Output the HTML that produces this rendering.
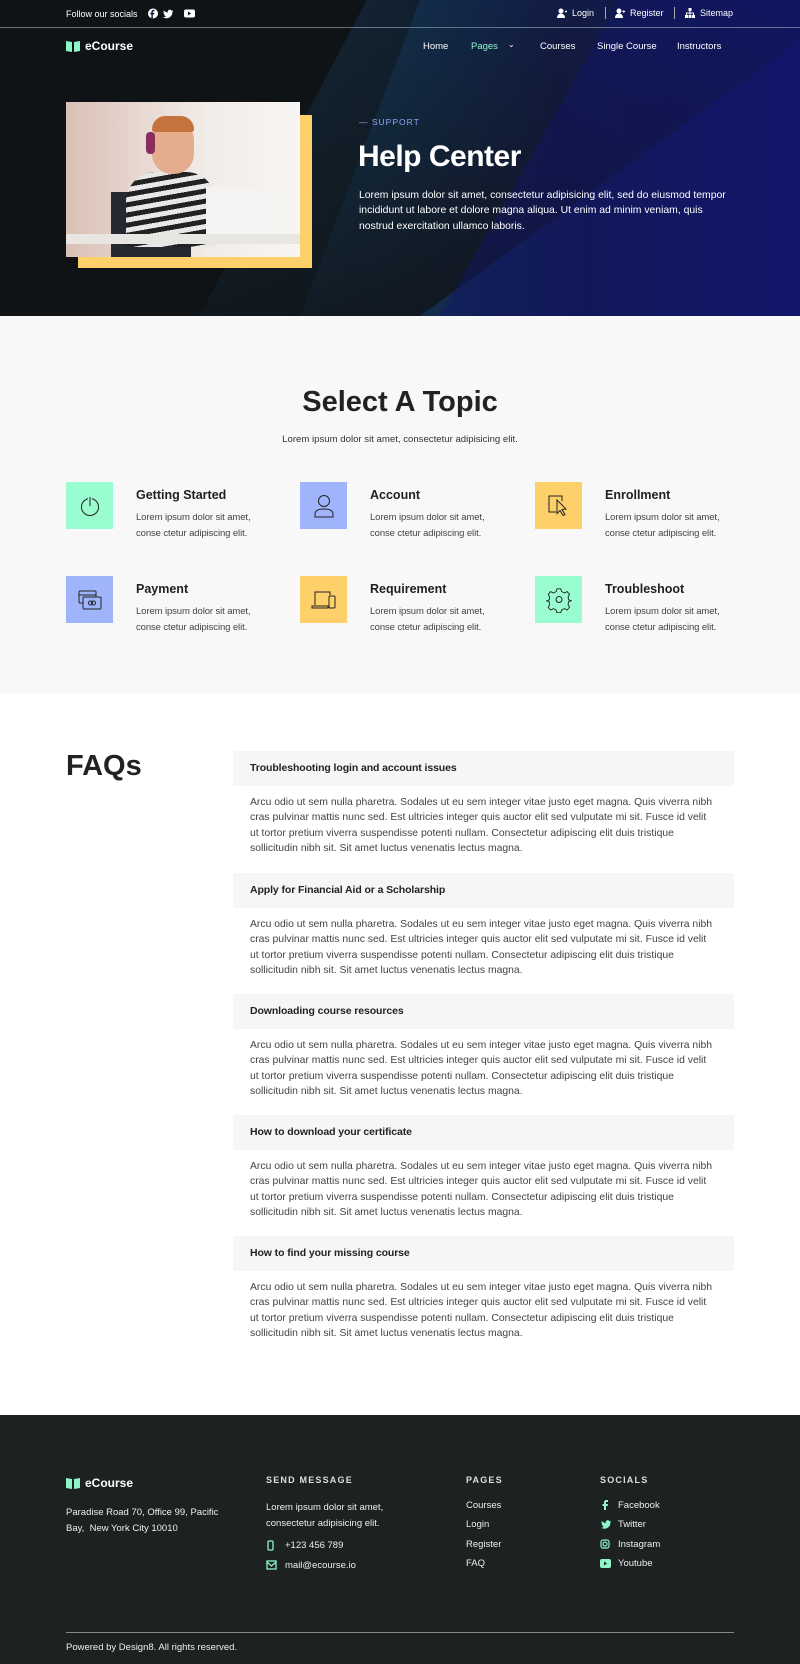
<!DOCTYPE html>
<html><head><meta charset="utf-8"><style>
*{margin:0;padding:0;box-sizing:border-box}
body{width:800px;height:1664px;font-family:"Liberation Sans",sans-serif;color:#222;background:#fff;overflow:hidden;position:relative}
.abs{position:absolute}
#hero{position:absolute;left:0;top:0;width:800px;height:316px;overflow:hidden;background:#101316}
.w{color:#fff}
.small{font-size:9px}
.nav a{position:absolute;top:41px;font-size:9.5px;color:#fff}
#topics{position:absolute;top:316px;left:0;width:800px;height:377px;background:#f8f8f8}
.ic{position:absolute;width:47px;height:47px;display:flex;align-items:center;justify-content:center}
.tt{position:absolute;font-size:12.5px;font-weight:bold;color:#1f1f1f}
.td{position:absolute;font-size:9.5px;line-height:16px;color:#444;letter-spacing:-0.1px}
.q{position:absolute;left:233px;width:501px;height:35px;background:#f6f6f6;font-size:10.5px;font-weight:bold;padding:11px 0 0 17px;color:#222;letter-spacing:-0.1px}
.a{position:absolute;left:250px;font-size:10.4px;line-height:15.4px;color:#444;letter-spacing:0;white-space:nowrap}
#footer{position:absolute;top:1415px;left:0;width:800px;height:249px;background:#1e2122;color:#eee}
.fh{position:absolute;top:1475px;font-size:9px;letter-spacing:1.2px;font-weight:bold;color:#ddd}
.ft{position:absolute;font-size:9.5px;color:#eee}
</style></head><body>
<div id="hero">
 <svg class="abs" style="left:0;top:0" width="800" height="316">
  <defs>
   <linearGradient id="g1" x1="0" y1="0" x2="1" y2="0"><stop offset="0" stop-color="#17445f"/><stop offset="0.35" stop-color="#132f4c"/><stop offset="0.6" stop-color="#121c4a"/><stop offset="1" stop-color="#12166a"/></linearGradient>
   <linearGradient id="fade" x1="0" y1="0" x2="0.2" y2="1"><stop offset="0" stop-color="#101316" stop-opacity="0"/><stop offset="1" stop-color="#101316" stop-opacity="1"/></linearGradient>
  </defs>
  <rect width="800" height="316" fill="#101316"/>
  <polygon points="367,0 800,0 800,316 200,316" fill="url(#g1)"/>
  <polygon points="367,0 420,0 300,316 200,316" fill="#101316" opacity="0.5"/>
  <polygon points="367,0 800,0 800,40 420,316 200,316" fill="url(#fade)" opacity="0.8"/>
  <polygon points="620,0 800,0 800,316 440,316" fill="#12166a" opacity="0.45"/>
  <line x1="0" y1="27.5" x2="800" y2="27.5" stroke="#7f9aa8" stroke-width="1" opacity="0.7"/>
 </svg>
 <div class="abs w small" style="left:66px;top:9px">Follow our socials</div>
 <svg class="abs" style="left:148px;top:8px" width="50" height="12" fill="#fff"><circle cx="5" cy="5.5" r="5"/><path d="M6.5 3.2h-1c-.5 0-.7.3-.7.7v1h1.6l-.2 1.5H4.8v4H3.4v-4H2.3V4.9h1.1V3.8c0-1.2.8-1.9 1.9-1.9h1.2z" fill="#113"/><path d="M19 3c-.4.2-.8.3-1.2.3.4-.3.8-.7.9-1.2-.4.2-.8.4-1.3.5a2 2 0 00-3.5 1.9c-1.7-.1-3.2-.9-4.2-2.1-.6 1 0 2.2.7 2.7-.3 0-.6-.1-.9-.2 0 1 .7 1.8 1.6 2-.3.1-.6.1-.9 0 .3.8 1 1.4 1.9 1.4-.9.7-2 1-3.1.9 4.7 2.7 9.6-.5 9.4-5.2.5-.3.9-.7 1.2-1.2z" transform="translate(6,0)"/><rect x="36" y="1.5" width="11" height="8" rx="2"/><path d="M40 3.5v4l3.2-2z" fill="#113"/></svg>
 <svg class="abs" style="left:557px;top:8px" width="10" height="10" fill="#fff"><circle cx="4" cy="3" r="2.5"/><path d="M0 10c0-3 2-4.5 4-4.5s4 1.5 4 4.5z"/><path d="M8 3.5h2M9 2.5v2" stroke="#fff"/></svg>
 <div class="abs w small" style="left:572px;top:8px">Login</div>
 <div class="abs" style="left:605px;top:7px;width:1px;height:12px;background:#aaa"></div>
 <svg class="abs" style="left:615px;top:8px" width="10" height="10" fill="#fff"><circle cx="4" cy="3" r="2.5"/><path d="M0 10c0-3 2-4.5 4-4.5s4 1.5 4 4.5z"/><path d="M7.5 3.5h2.5M8.75 2.2v2.6" stroke="#fff"/></svg>
 <div class="abs w small" style="left:630px;top:8px">Register</div>
 <div class="abs" style="left:674px;top:7px;width:1px;height:12px;background:#aaa"></div>
 <svg class="abs" style="left:685px;top:8px" width="10" height="10" fill="#fff"><rect x="3.5" y="0" width="3" height="3"/><rect x="0" y="7" width="3" height="3"/><rect x="3.5" y="7" width="3" height="3"/><rect x="7" y="7" width="3" height="3"/><path d="M5 3v4M1.5 7V5h7v2" stroke="#fff" fill="none"/></svg>
 <div class="abs w small" style="left:700px;top:8px">Sitemap</div>
 <svg class="abs" style="left:66px;top:40px" width="14" height="12"><path d="M0 1l6 1v10L0 11zM8 2l6-1v10l-6 1z" fill="#8ef5c8"/></svg>
 <div class="abs w" style="left:85px;top:39px;font-size:12px;font-weight:bold">eCourse</div>
 <div class="nav">
  <a style="left:423px">Home</a>
  <a style="left:471px;color:#8ef5c8">Pages</a>
  <a style="left:508px;top:40px;font-size:8px">&#8964;</a>
  <a style="left:540px">Courses</a>
  <a style="left:597px">Single Course</a>
  <a style="left:677px">Instructors</a>
 </div>
 <div class="abs" style="left:78px;top:115px;width:234px;height:153px;background:#fdd06a"></div>
 <div class="abs" style="left:66px;top:102px;width:234px;height:155px;overflow:hidden;background:linear-gradient(90deg,#d9c0b4 0%,#e7d6cf 30%,#f1ece8 60%,#f7f5f3 100%)">
  <div class="abs" style="left:45px;top:90px;width:80px;height:65px;background:#262a30"></div>
  <div class="abs" style="left:60px;top:70px;width:90px;height:75px;border-radius:30px 30px 0 0;background:repeating-linear-gradient(170deg,#222 0 5px,#e8e8e8 5px 10px)"></div>
  <div class="abs" style="left:86px;top:18px;width:42px;height:54px;border-radius:20px;background:#e3ad8e"></div>
  <div class="abs" style="left:86px;top:14px;width:42px;height:16px;border-radius:20px 20px 4px 4px;background:#c4733d"></div>
  <div class="abs" style="left:80px;top:30px;width:9px;height:22px;border-radius:4px;background:#8a2c5e"></div>
  <div class="abs" style="left:140px;top:85px;width:80px;height:55px;background:#f4f3f2"></div>
  <div class="abs" style="left:0;top:132px;width:234px;height:10px;background:#e8e6e3"></div>
 </div>
 <div class="abs" style="left:359px;top:117px;font-size:8.5px;letter-spacing:1px;color:#8fa6f8">— SUPPORT</div>
 <div class="abs w" style="left:358px;top:140px;font-size:30px;font-weight:bold;letter-spacing:-0.5px">Help Center</div>
 <div class="abs w" style="left:359px;top:188px;white-space:nowrap;font-size:10.4px;line-height:15.4px;letter-spacing:0">Lorem ipsum dolor sit amet, consectetur adipisicing elit, sed do eiusmod tempor<br>incididunt ut labore et dolore magna aliqua. Ut enim ad minim veniam, quis<br>nostrud exercitation ullamco laboris.</div>
</div>

<div id="topics">
 <div class="abs" style="left:0;width:800px;top:70px;text-align:center;font-size:29px;font-weight:bold;color:#222">Select A Topic</div>
 <div class="abs" style="left:0;width:800px;top:118px;text-align:center;font-size:9.6px;color:#333">Lorem ipsum dolor sit amet, consectetur adipisicing elit.</div>
</div>
<div class="ic" style="left:66px;top:482px;background:#99fdd0"><svg width="22" height="22" fill="none" stroke="#222" stroke-width="1"><circle cx="11" cy="12" r="8.5"/><path d="M11 2v9" stroke="#99fdd0" stroke-width="4"/><path d="M11 2v9"/></svg></div>
<div class="tt" style="left:136px;top:488px">Getting Started</div>
<div class="td" style="left:136px;top:510px">Lorem ipsum dolor sit amet,<br>conse ctetur adipiscing elit.</div>
<div class="ic" style="left:300px;top:482px;background:#a0b4fb"><svg width="24" height="26" fill="none" stroke="#222" stroke-width="1"><circle cx="12" cy="8" r="5.5"/><path d="M3 24v-3c0-3 3-5 9-5s9 2 9 5v3z"/></svg></div>
<div class="tt" style="left:370px;top:488px">Account</div>
<div class="td" style="left:370px;top:510px">Lorem ipsum dolor sit amet,<br>conse ctetur adipiscing elit.</div>
<div class="ic" style="left:535px;top:482px;background:#fdd06a"><svg width="24" height="26" fill="none" stroke="#222" stroke-width="1"><path d="M9 19H2V3h13v5"/><path d="M10 7l9 9-4 .5 3 5-2 1-3-5-3 3z" fill="#fdd06a"/></svg></div>
<div class="tt" style="left:605px;top:488px">Enrollment</div>
<div class="td" style="left:605px;top:510px">Lorem ipsum dolor sit amet,<br>conse ctetur adipiscing elit.</div>
<div class="ic" style="left:66px;top:576px;background:#a0b4fb"><svg width="26" height="22" fill="none" stroke="#222" stroke-width="1"><rect x="2" y="2" width="17" height="12" rx="1"/><path d="M2 6h17"/><rect x="6" y="8" width="18" height="12" rx="1" fill="#a0b4fb"/><circle cx="13.5" cy="14" r="2"/><circle cx="16.5" cy="14" r="2"/></svg></div>
<div class="tt" style="left:136px;top:582px">Payment</div>
<div class="td" style="left:136px;top:604px">Lorem ipsum dolor sit amet,<br>conse ctetur adipiscing elit.</div>
<div class="ic" style="left:300px;top:576px;background:#fdd06a"><svg width="26" height="22" fill="none" stroke="#222" stroke-width="1"><path d="M4 16V3h15v3"/><path d="M1 17h16v2H1z"/><rect x="18" y="7" width="6" height="12" rx="1"/></svg></div>
<div class="tt" style="left:370px;top:582px">Requirement</div>
<div class="td" style="left:370px;top:604px">Lorem ipsum dolor sit amet,<br>conse ctetur adipiscing elit.</div>
<div class="ic" style="left:535px;top:576px;background:#99fdd0"><svg width="26" height="26" fill="none" stroke="#222" stroke-width="1"><path d="M11 2h4l1 3 3 1.5 3-1.5 2.5 3-1.5 3 .5 3 3 1v0l-3 1-.5 3 1.5 3-2.5 3-3-1.5-3 1.5-1 3h-4l-1-3-3-1.5-3 1.5-2.5-3 1.5-3-.5-3-3-1 3-1 .5-3-1.5-3 2.5-3 3 1.5 3-1.5z" transform="scale(.92) translate(1 0)"/><circle cx="13" cy="12.5" r="3"/></svg></div>
<div class="tt" style="left:605px;top:582px">Troubleshoot</div>
<div class="td" style="left:605px;top:604px">Lorem ipsum dolor sit amet,<br>conse ctetur adipiscing elit.</div>

<div class="abs" style="left:66px;top:750px;font-size:29px;font-weight:bold;color:#222">FAQs</div>

<div class="q" style="top:751px">Troubleshooting login and account issues</div>
<div class="a" style="top:795px">Arcu odio ut sem nulla pharetra. Sodales ut eu sem integer vitae justo eget magna. Quis viverra nibh<br>cras pulvinar mattis nunc sed. Est ultricies integer quis auctor elit sed vulputate mi sit. Fusce id velit<br>ut tortor pretium viverra suspendisse potenti nullam. Consectetur adipiscing elit duis tristique<br>sollicitudin nibh sit. Sit amet luctus venenatis lectus magna.</div>
<div class="q" style="top:873px">Apply for Financial Aid or a Scholarship</div>
<div class="a" style="top:917px">Arcu odio ut sem nulla pharetra. Sodales ut eu sem integer vitae justo eget magna. Quis viverra nibh<br>cras pulvinar mattis nunc sed. Est ultricies integer quis auctor elit sed vulputate mi sit. Fusce id velit<br>ut tortor pretium viverra suspendisse potenti nullam. Consectetur adipiscing elit duis tristique<br>sollicitudin nibh sit. Sit amet luctus venenatis lectus magna.</div>
<div class="q" style="top:994px">Downloading course resources</div>
<div class="a" style="top:1038px">Arcu odio ut sem nulla pharetra. Sodales ut eu sem integer vitae justo eget magna. Quis viverra nibh<br>cras pulvinar mattis nunc sed. Est ultricies integer quis auctor elit sed vulputate mi sit. Fusce id velit<br>ut tortor pretium viverra suspendisse potenti nullam. Consectetur adipiscing elit duis tristique<br>sollicitudin nibh sit. Sit amet luctus venenatis lectus magna.</div>
<div class="q" style="top:1115px">How to download your certificate</div>
<div class="a" style="top:1159px">Arcu odio ut sem nulla pharetra. Sodales ut eu sem integer vitae justo eget magna. Quis viverra nibh<br>cras pulvinar mattis nunc sed. Est ultricies integer quis auctor elit sed vulputate mi sit. Fusce id velit<br>ut tortor pretium viverra suspendisse potenti nullam. Consectetur adipiscing elit duis tristique<br>sollicitudin nibh sit. Sit amet luctus venenatis lectus magna.</div>
<div class="q" style="top:1236px">How to find your missing course</div>
<div class="a" style="top:1280px">Arcu odio ut sem nulla pharetra. Sodales ut eu sem integer vitae justo eget magna. Quis viverra nibh<br>cras pulvinar mattis nunc sed. Est ultricies integer quis auctor elit sed vulputate mi sit. Fusce id velit<br>ut tortor pretium viverra suspendisse potenti nullam. Consectetur adipiscing elit duis tristique<br>sollicitudin nibh sit. Sit amet luctus venenatis lectus magna.</div>

<div id="footer"></div>
<svg class="abs" style="left:66px;top:1477px" width="14" height="12"><path d="M0 1l6 1v10L0 11zM8 2l6-1v10l-6 1z" fill="#8ef5c8"/></svg>
<div class="abs" style="left:85px;top:1476px;font-size:12px;font-weight:bold;color:#fff">eCourse</div>
<div class="ft" style="left:66px;top:1505px;line-height:16px">Paradise Road 70, Office 99, Pacific<br>Bay,&nbsp; New York City 10010</div>
<div class="fh" style="left:266px">SEND MESSAGE</div>
<div class="ft" style="left:266px;top:1500px;line-height:16px">Lorem ipsum dolor sit amet,<br>consectetur adipisicing elit.</div>
<svg class="abs" style="left:267px;top:1540px" width="7" height="11" fill="none" stroke="#8ef5c8" stroke-width="1.3"><rect x="1" y="1" width="5" height="9" rx="1"/></svg>
<div class="ft" style="left:285px;top:1540px">+123 456 789</div>
<svg class="abs" style="left:266px;top:1560px" width="11" height="10" fill="none" stroke="#8ef5c8" stroke-width="1.3"><rect x="1" y="1" width="9" height="8"/><path d="M1 2l4.5 4L10 2"/></svg>
<div class="ft" style="left:285px;top:1560px">mail@ecourse.io</div>
<div class="fh" style="left:466px">PAGES</div>
<div class="ft" style="left:466px;top:1500px">Courses</div>
<div class="ft" style="left:466px;top:1519px">Login</div>
<div class="ft" style="left:466px;top:1539px">Register</div>
<div class="ft" style="left:466px;top:1558px">FAQ</div>
<div class="fh" style="left:600px">SOCIALS</div>
<svg class="abs" style="left:600px;top:1500px" width="10" height="10" fill="#8ef5c8"><path d="M6 0h2v2H6.5c-.4 0-.5.2-.5.5V4h2l-.3 2H6v5H4V6H2.5V4H4V2.3C4 .8 5 0 6 0z"/></svg>
<div class="ft" style="left:618px;top:1500px">Facebook</div>
<svg class="abs" style="left:600px;top:1520px" width="11" height="10" fill="#8ef5c8"><path d="M11 1.5c-.4.2-.8.3-1.2.3.4-.3.8-.7.9-1.2-.4.2-.8.4-1.3.5A2 2 0 005.9 3C4.2 2.9 2.7 2.1 1.7.9c-.6 1 0 2.2.7 2.7-.3 0-.6-.1-.9-.2 0 1 .7 1.8 1.6 2-.3.1-.6.1-.9 0 .3.8 1 1.4 1.9 1.4C3.2 7.5 2.1 7.8 1 7.7c4.7 2.7 9.6-.5 9.4-5.2.2-.3.4-.6.6-1z"/></svg>
<div class="ft" style="left:618px;top:1519px">Twitter</div>
<svg class="abs" style="left:600px;top:1539px" width="10" height="10" fill="none" stroke="#8ef5c8" stroke-width="1.2"><rect x="1" y="1" width="8" height="8" rx="2"/><circle cx="5" cy="5" r="2"/></svg>
<div class="ft" style="left:618px;top:1539px">Instagram</div>
<svg class="abs" style="left:600px;top:1559px" width="11" height="9"><rect x="0" y="0" width="11" height="9" rx="2" fill="#8ef5c8"/><path d="M4 2.5v4l3-2z" fill="#1e2122"/></svg>
<div class="ft" style="left:618px;top:1558px">Youtube</div>
<div class="abs" style="left:66px;top:1632px;width:668px;height:1px;background:#888"></div>
<div class="ft" style="left:66px;top:1642px">Powered by Design8. All rights reserved.</div>
</body></html>
